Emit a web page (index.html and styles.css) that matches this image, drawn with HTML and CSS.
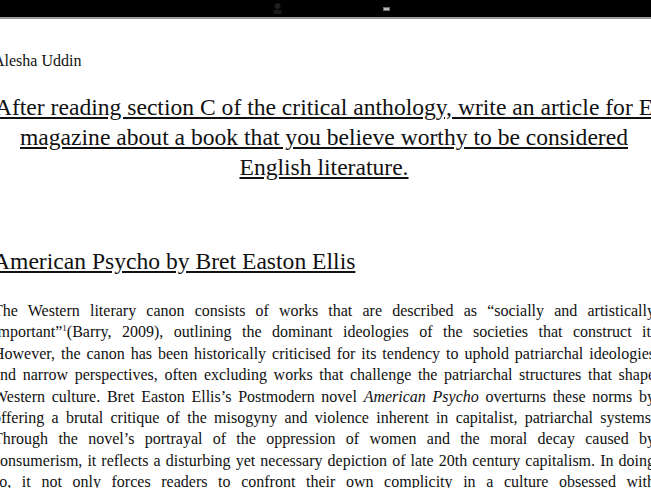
FILE: index.html
```html
<!DOCTYPE html>
<html>
	<head>
		<meta charset="UTF-8" />
		<meta name="viewport" content="width=device-width, initial-scale=1">
		<title>American Psycho - Alesha Uddin</title>
		<link rel="stylesheet" href="styles.css">
	</head>

	<body>
		<!-- top bar of the viewer -->
		<div class="topbar">
			<svg class="icon-cam" width="11" height="13" viewBox="0 0 11 13">
				<circle cx="5.5" cy="4" r="3" fill="#1e1e1e"/>
				<rect x="1" y="8" width="9" height="4" rx="2" fill="#181818"/>
			</svg>
			<svg class="icon-bat" width="8" height="4" viewBox="0 0 8 4">
				<rect x="0" y="0" width="7" height="4" fill="#6a6a6a"/>
				<rect x="1" y="1" width="5" height="2" fill="#b8b8b8"/>
			</svg>
		</div>

		<div class="page">
			<div class="author">Alesha Uddin</div>

			<h1 class="task">
				After reading section C of the critical anthology, write an article for E<br>
				magazine about a book that you believe worthy to be considered<br>
				English literature.
			</h1>

			<h2 class="heading">American Psycho by Bret Easton Ellis</h2>

			<!-- each line kept as in the document -->
			<div class="essay">
				<div class="line">The Western literary canon consists of works that are described as “socially and artistically</div>
				<div class="line">important”<sup>1</sup>(Barry, 2009), outlining the dominant ideologies of the societies that construct it.</div>
				<div class="line">However, the canon has been historically criticised for its tendency to uphold patriarchal ideologies</div>
				<div class="line">and narrow perspectives, often excluding works that challenge the patriarchal structures that shape</div>
				<div class="line">Western culture. Bret Easton Ellis’s Postmodern novel <i>American Psycho</i> overturns these norms by</div>
				<div class="line">offering a brutal critique of the misogyny and violence inherent in capitalist, patriarchal systems.</div>
				<div class="line">Through the novel’s portrayal of the oppression of women and the moral decay caused by</div>
				<div class="line">consumerism, it reflects a disturbing yet necessary depiction of late 20th century capitalism. In doing</div>
				<div class="line">so, it not only forces readers to confront their own complicity in a culture obsessed with</div>
			</div>
		</div>
	</body>
</html>
```

FILE: styles.css
```css
*{
    box-sizing: border-box;
}

html, body{
    margin: 0;
    padding: 0;
    background-color: white;
    overflow: hidden;
}

body{
    width: 651px;
    height: 488px;
}

.topbar{
    height: 19px;
    background-color: black;
    border-bottom: 2px solid #9c9c9c;
    display: flex;
    align-items: center;
    padding-left: 272px;
}

.icon-cam{
    display: block;
}

.icon-bat{
    display: block;
    margin-left: 100px;
}

.page{
    width: 662px;
    margin-left: -7px;
    padding-top: 32px;
    font-family: "Liberation Serif", "Times New Roman", serif;
    color: #111;
}

.author{
    font-size: 16px;
    line-height: 20px;
}

.task{
    margin: 21px 0 0;
    font-size: 23.6px;
    font-weight: normal;
    line-height: 30px;
    text-align: center;
    text-decoration: underline;
}

.heading{
    margin: 64px 0 0;
    font-size: 23.6px;
    font-weight: normal;
    line-height: 30px;
    text-decoration: underline;
}

.essay{
    margin-top: 24px;
    font-size: 16px;
    line-height: 21.4px;
}

.line{
    text-align: justify;
    text-align-last: justify;
    white-space: nowrap;
}

.line sup{
    font-size: 9px;
    line-height: 0;
    vertical-align: 6px;
}
```
